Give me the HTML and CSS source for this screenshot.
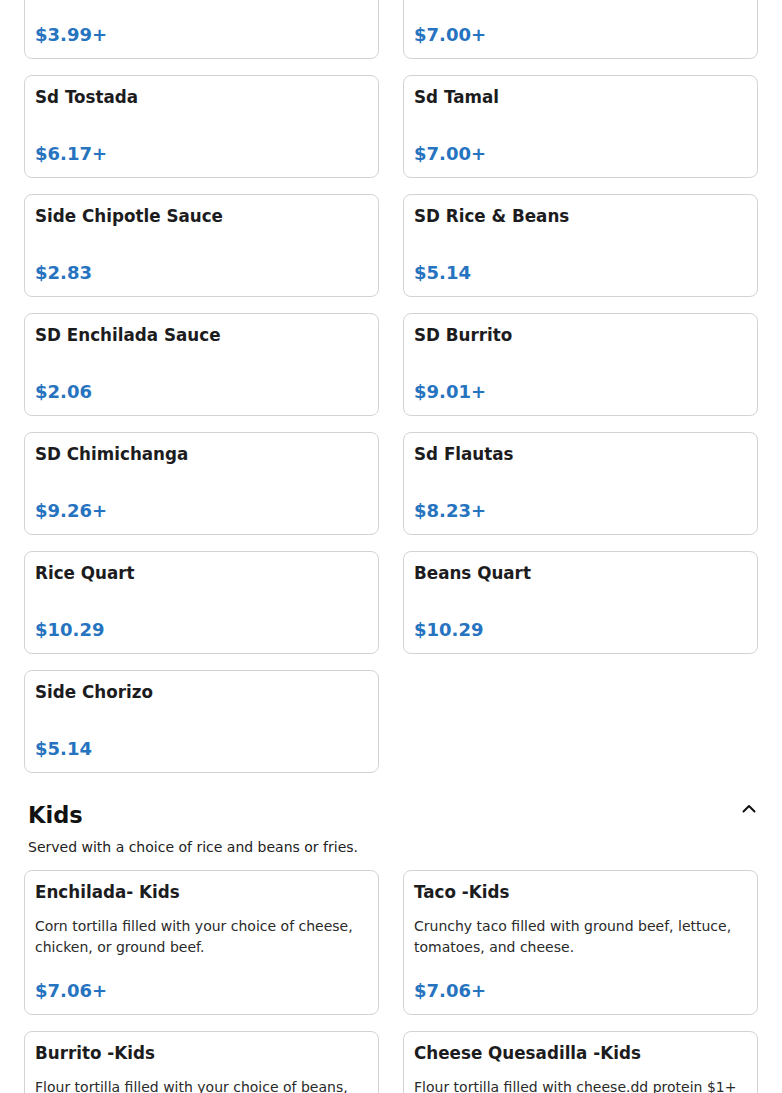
FILE: index.html
```html
<!DOCTYPE html>
<html lang="en">
<head>
<meta charset="utf-8">
<title>Menu</title>
<link rel="stylesheet" href="styles.css">
</head>
<body>
<main class="menu">
  <section class="section section-sides">
    <div class="grid">
      <div class="card"><div class="name">Sd Enchilada</div><div class="price">$3.99+</div></div>
      <div class="card"><div class="name">Sd Chile Relleno</div><div class="price">$7.00+</div></div>
      <div class="card"><div class="name">Sd Tostada</div><div class="price">$6.17+</div></div>
      <div class="card"><div class="name">Sd Tamal</div><div class="price">$7.00+</div></div>
      <div class="card"><div class="name">Side Chipotle Sauce</div><div class="price">$2.83</div></div>
      <div class="card"><div class="name">SD Rice &amp; Beans</div><div class="price">$5.14</div></div>
      <div class="card"><div class="name">SD Enchilada Sauce</div><div class="price">$2.06</div></div>
      <div class="card"><div class="name">SD Burrito</div><div class="price">$9.01+</div></div>
      <div class="card"><div class="name">SD Chimichanga</div><div class="price">$9.26+</div></div>
      <div class="card"><div class="name">Sd Flautas</div><div class="price">$8.23+</div></div>
      <div class="card"><div class="name">Rice Quart</div><div class="price">$10.29</div></div>
      <div class="card"><div class="name">Beans Quart</div><div class="price">$10.29</div></div>
      <div class="card"><div class="name">Side Chorizo</div><div class="price">$5.14</div></div>
    </div>
  </section>

  <section class="section section-kids">
    <div class="section-head">
      <h2 class="section-title">Kids</h2>
      <svg class="chevron" width="14" height="9" viewBox="0 0 14 9" aria-hidden="true"><polyline points="1.5,7.5 7,2 12.5,7.5" fill="none" stroke="#111" stroke-width="2" stroke-linecap="round" stroke-linejoin="round"/></svg>
    </div>
    <p class="section-desc">Served with a choice of rice and beans or fries.</p>
    <div class="grid">
      <div class="card"><div class="name">Enchilada- Kids</div><div class="desc">Corn tortilla filled with your choice of cheese, chicken, or ground beef.</div><div class="price">$7.06+</div></div>
      <div class="card"><div class="name">Taco -Kids</div><div class="desc">Crunchy taco filled with ground beef, lettuce, tomatoes, and cheese.</div><div class="price">$7.06+</div></div>
      <div class="card"><div class="name">Burrito -Kids</div><div class="desc">Flour tortilla filled with your choice of beans, cheese, chicken, or ground beef.</div><div class="price">$7.06+</div></div>
      <div class="card"><div class="name">Cheese Quesadilla -Kids</div><div class="desc">Flour tortilla filled with cheese.dd protein $1+</div><div class="price">$7.06+</div></div>
    </div>
  </section>
</main>
</body>
</html>
```
FILE: styles.css
```css
html, body {
  margin: 0;
  padding: 0;
  background: #ffffff;
}

body {
  font-family: "DejaVu Sans", "Liberation Sans", sans-serif;
  color: #1f1f1f;
  overflow: hidden;
}

.menu {
  padding: 0 24px;
  margin-top: -44px;
}

.grid {
  display: grid;
  grid-template-columns: 1fr 1fr;
  column-gap: 24px;
  row-gap: 16px;
}

.card {
  border: 1px solid #d3d3d3;
  border-radius: 8px;
  padding: 11px 10px 11px 10px;
  display: flex;
  flex-direction: column;
  background: #fff;
}

.name {
  font-size: 16.75px;
  font-weight: bold;
  line-height: 20px;
  margin-bottom: 14px;
  color: #1c1c1e;
}

.desc {
  font-size: 14px;
  line-height: 21px;
  color: #2a2a2a;
}

.price {
  margin-top: auto;
  padding-top: 21px;
  font-size: 18px;
  font-weight: bold;
  line-height: 24px;
  color: #2673bf;
}

.section-kids {
  margin-top: 28px;
}

.section-head {
  display: flex;
  align-items: center;
  justify-content: space-between;
  padding: 0 2px 0 4px;
}

.section-title {
  margin: 0;
  font-size: 22.5px;
  line-height: 28px;
  font-weight: bold;
  color: #111;
}

.chevron {
  display: block;
  margin-top: -14px;
}

.section-desc {
  margin: 8px 0 13px 0;
  padding-left: 4px;
  font-size: 14px;
  line-height: 20px;
  color: #222;
}
```
